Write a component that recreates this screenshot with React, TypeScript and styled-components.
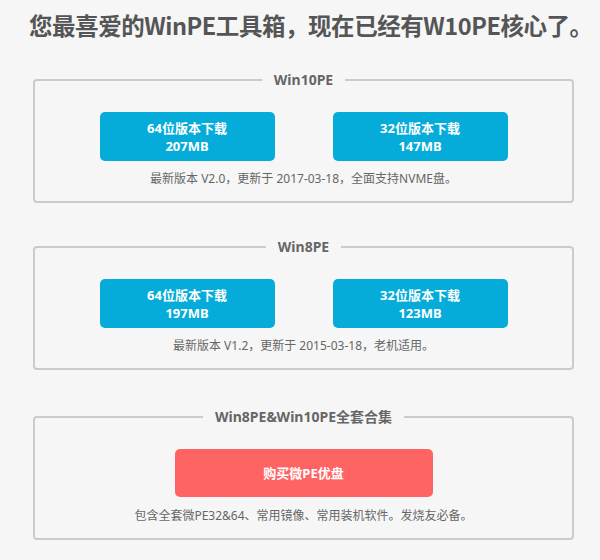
import React from "react";
import styled, { createGlobalStyle } from "styled-components";

const GlobalStyle = createGlobalStyle`
  html, body {
    margin: 0;
    padding: 0;
    background: #f6f6f6;
  }
  body {
    font-family: "Noto Sans", "Noto Sans CJK SC", sans-serif;
    color: #666;
  }
`;

const Page = styled.div`
  display: flex;
  flex-direction: column;
  padding: 8px 0 20px;
`;

const Title = styled.h1`
  align-self: flex-start;
  margin: 0 0 28px 29px;
  font-family: "Noto Sans CJK SC", sans-serif;
  font-weight: 700;
  font-size: 23.5px;
  line-height: 34px;
  color: #555;
  white-space: nowrap;
  letter-spacing: -0.45px;
`;

const Column = styled.div`
  display: flex;
  flex-direction: column;
  margin-left: 33px;
  width: 541px;
`;

const Box = styled.fieldset<{ $gap: number }>`
  margin: 0 0 ${(p) => p.$gap}px 0;
  padding: 22px 0 13px;
  border: 2px solid #cbcbcb;
  border-radius: 4px;
  display: flex;
  flex-direction: column;
  align-items: center;
`;

const Legend = styled.legend`
  margin: 0 auto;
  padding: 0 12px;
  font-family: "Noto Sans", "Noto Sans CJK SC", sans-serif;
  font-weight: 700;
  font-size: 14px;
  line-height: 20px;
  color: #666;
`;

const ButtonRow = styled.div`
  display: flex;
  gap: 58px;
  justify-content: center;
`;

const Button = styled.a<{ $variant: "blue" | "red"; $width: number }>`
  display: flex;
  flex-direction: column;
  align-items: center;
  justify-content: center;
  width: ${(p) => p.$width}px;
  height: ${(p) => (p.$variant === "red" ? 48 : 49)}px;
  border-radius: 5px;
  background: ${(p) => (p.$variant === "red" ? "#ff6464" : "#05acda")};
  color: #fff;
  font-family: "Noto Sans", "Noto Sans CJK SC", sans-serif;
  font-weight: 700;
  font-size: 13px;
  line-height: 18px;
  text-decoration: none;
  cursor: pointer;
`;

const Caption = styled.p<{ $top: number }>`
  margin: ${(p) => p.$top}px 0 0;
  font-family: "Noto Sans", "Noto Sans CJK SC", sans-serif;
  font-size: 12px;
  line-height: 18px;
  color: #666;
`;

type Version = {
  name: string;
  x64: string;
  x32: string;
  note: string;
};

const versions: Version[] = [
  {
    name: "Win10PE",
    x64: "207MB",
    x32: "147MB",
    note: "最新版本 V2.0，更新于 2017-03-18，全面支持NVME盘。",
  },
  {
    name: "Win8PE",
    x64: "197MB",
    x32: "123MB",
    note: "最新版本 V1.2，更新于 2015-03-18，老机适用。",
  },
];

export default function App() {
  return (
    <>
      <GlobalStyle />
      <Page>
        <Title>您最喜爱的WinPE工具箱，现在已经有W10PE核心了。</Title>
        <Column>
          {versions.map((v, i) => (
            <Box key={v.name} $gap={i === 0 ? 34 : 37}>
              <Legend>{v.name}</Legend>
              <ButtonRow>
                <Button $variant="blue" $width={175}>
                  <span>64位版本下载</span>
                  <span>{v.x64}</span>
                </Button>
                <Button $variant="blue" $width={175}>
                  <span>32位版本下载</span>
                  <span>{v.x32}</span>
                </Button>
              </ButtonRow>
              <Caption $top={9}>{v.note}</Caption>
            </Box>
          ))}
          <Box $gap={0}>
            <Legend>Win8PE&amp;Win10PE全套合集</Legend>
            <Button $variant="red" $width={258}>
              <span>购买微PE优盘</span>
            </Button>
            <Caption $top={10}>包含全套微PE32&amp;64、常用镜像、常用装机软件。发烧友必备。</Caption>
          </Box>
        </Column>
      </Page>
    </>
  );
}
